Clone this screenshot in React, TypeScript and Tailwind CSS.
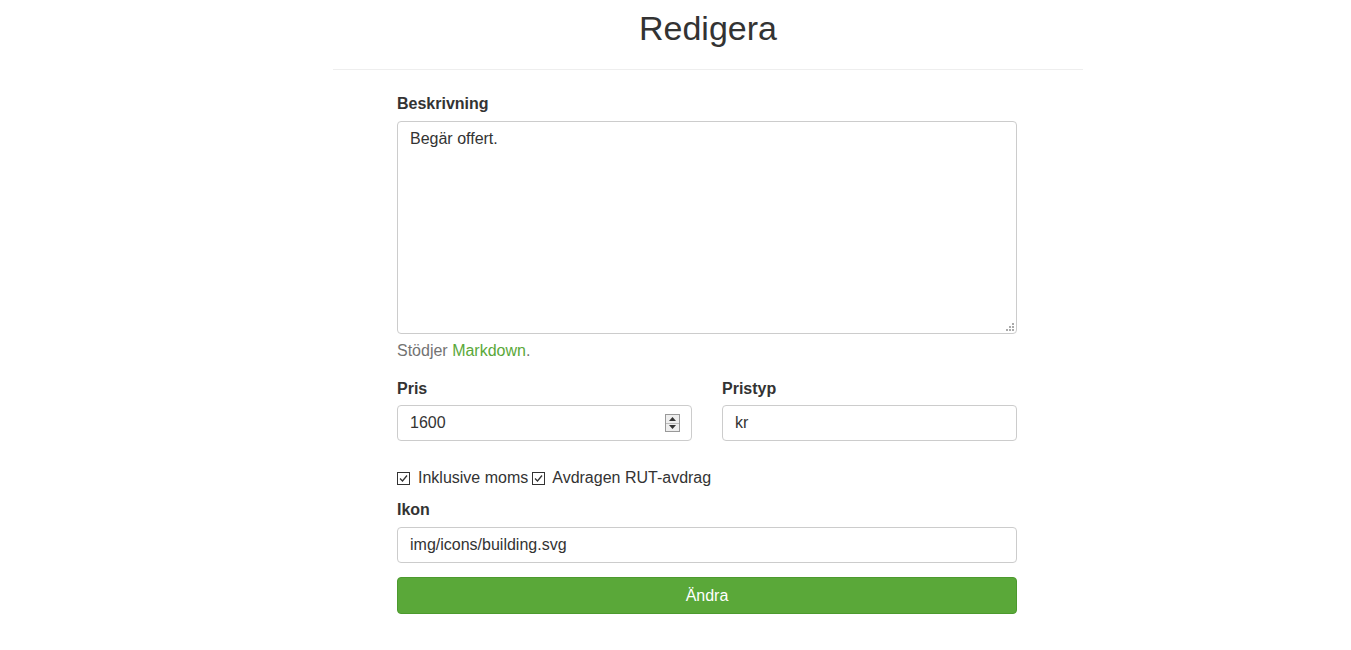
import { useState } from "react";

function CheckIcon() {
    return (
        <svg width="13" height="13" viewBox="0 0 13 13" className="shrink-0">
            <rect x="0.5" y="0.5" width="12" height="12" fill="white" stroke="#333" strokeWidth="1" />
            <path d="M3 6.5 L5.5 9 L10 3.5" fill="none" stroke="#333" strokeWidth="1.3" />
        </svg>
    );
}

export default function App() {
    const [desc, setDesc] = useState("Begär offert.");
    const [price, setPrice] = useState("1600");
    const [priceType, setPriceType] = useState("kr");
    const [icon, setIcon] = useState("img/icons/building.svg");

    return (
        <div className="min-h-screen bg-white text-[#333] font-['Liberation_Sans',Arial,sans-serif]">
            <div className="w-[750px] ml-[333px]">
                <h1 className="text-center text-[34px] leading-[40px] pt-[8px] pb-[21px] border-b border-[#eee]">
                    Redigera
                </h1>

                <form className="w-[620px] ml-[64px] pt-[22px] text-[16px]" onSubmit={(e) => e.preventDefault()}>
                    <label className="block font-bold leading-[22px] pt-[1px]">Beskrivning</label>
                    <div className="relative mt-[6px]">
                        <textarea
                            value={desc}
                            onChange={(e) => setDesc(e.target.value)}
                            className="block w-full h-[213px] resize-none border border-[#ccc] rounded-[4px] px-[12px] pt-[6px] pb-[5px] leading-[22px] outline-none"
                        />
                        <svg width="8" height="8" viewBox="0 0 8 8" className="absolute right-[3px] bottom-[3px]">
                            <rect x="6" y="0" width="2" height="2" fill="#aaa" />
                            <rect x="3" y="3" width="2" height="2" fill="#aaa" />
                            <rect x="6" y="3" width="2" height="2" fill="#aaa" />
                            <rect x="0" y="6" width="2" height="2" fill="#aaa" />
                            <rect x="3" y="6" width="2" height="2" fill="#aaa" />
                            <rect x="6" y="6" width="2" height="2" fill="#aaa" />
                        </svg>
                    </div>
                    <p className="mt-[5px] pt-[1px] leading-[22px] text-[#737373]">
                        Stödjer <a href="#" className="text-[#5aa839]">Markdown</a>.
                    </p>

                    <div className="grid grid-cols-2 gap-[30px] mt-[15px]">
                        <div>
                            <label className="block font-bold leading-[22px] pt-[1px]">Pris</label>
                            <div className="relative mt-[5px]">
                                <input
                                    value={price}
                                    onChange={(e) => setPrice(e.target.value)}
                                    className="block w-full h-[36px] border border-[#ccc] rounded-[4px] px-[12px] outline-none"
                                />
                                <div className="absolute right-[12px] top-[9px] w-[15px] h-[18px] border border-[#999] bg-[#eee] flex flex-col">
                                    <div className="flex-1 flex items-center justify-center border-b border-[#bbb]">
                                        <svg width="7" height="4" viewBox="0 0 7 4"><path d="M0 4 L3.5 0 L7 4Z" fill="#333" /></svg>
                                    </div>
                                    <div className="flex-1 flex items-center justify-center">
                                        <svg width="7" height="4" viewBox="0 0 7 4"><path d="M0 0 L3.5 4 L7 0Z" fill="#333" /></svg>
                                    </div>
                                </div>
                            </div>
                        </div>
                        <div>
                            <label className="block font-bold leading-[22px] pt-[1px]">Pristyp</label>
                            <input
                                value={priceType}
                                onChange={(e) => setPriceType(e.target.value)}
                                className="block w-full mt-[5px] h-[36px] border border-[#ccc] rounded-[4px] px-[12px] outline-none"
                            />
                        </div>
                    </div>

                    <div className="flex items-center mt-[25px] pt-[1px] leading-[22px]">
                        <CheckIcon />
                        <span className="ml-[8px]">Inklusive moms</span>
                        <span className="ml-[4px]"><CheckIcon /></span>
                        <span className="ml-[7px]">Avdragen RUT-avdrag</span>
                    </div>

                    <label className="block font-bold leading-[22px] pt-[1px] mt-[9px]">Ikon</label>
                    <input
                        value={icon}
                        onChange={(e) => setIcon(e.target.value)}
                        className="block w-full mt-[6px] h-[36px] border border-[#ccc] rounded-[4px] px-[12px] outline-none"
                    />

                    <button
                        type="submit"
                        className="block w-full mt-[14px] h-[37px] bg-[#5aa839] border border-[#4c9a2e] rounded-[4px] text-white text-[16px]"
                    >
                        Ändra
                    </button>
                </form>
            </div>
        </div>
    );
}
